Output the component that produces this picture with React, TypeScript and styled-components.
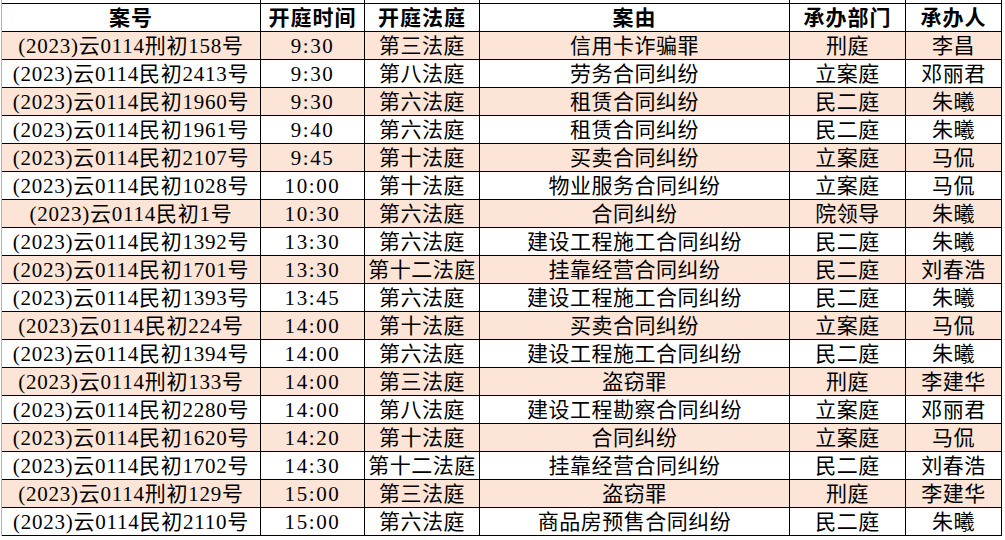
import { FC } from 'react'
import styled, { createGlobalStyle } from 'styled-components'

type Hearing = {
  caseNo: string
  time: string
  court: string
  cause: string
  dept: string
  judge: string
}

const hearings: Hearing[] = [
  { caseNo: '(2023)云0114刑初158号', time: '9:30', court: '第三法庭', cause: '信用卡诈骗罪', dept: '刑庭', judge: '李昌' },
  { caseNo: '(2023)云0114民初2413号', time: '9:30', court: '第八法庭', cause: '劳务合同纠纷', dept: '立案庭', judge: '邓丽君' },
  { caseNo: '(2023)云0114民初1960号', time: '9:30', court: '第六法庭', cause: '租赁合同纠纷', dept: '民二庭', judge: '朱曦' },
  { caseNo: '(2023)云0114民初1961号', time: '9:40', court: '第六法庭', cause: '租赁合同纠纷', dept: '民二庭', judge: '朱曦' },
  { caseNo: '(2023)云0114民初2107号', time: '9:45', court: '第十法庭', cause: '买卖合同纠纷', dept: '立案庭', judge: '马侃' },
  { caseNo: '(2023)云0114民初1028号', time: '10:00', court: '第十法庭', cause: '物业服务合同纠纷', dept: '立案庭', judge: '马侃' },
  { caseNo: '(2023)云0114民初1号', time: '10:30', court: '第六法庭', cause: '合同纠纷', dept: '院领导', judge: '朱曦' },
  { caseNo: '(2023)云0114民初1392号', time: '13:30', court: '第六法庭', cause: '建设工程施工合同纠纷', dept: '民二庭', judge: '朱曦' },
  { caseNo: '(2023)云0114民初1701号', time: '13:30', court: '第十二法庭', cause: '挂靠经营合同纠纷', dept: '民二庭', judge: '刘春浩' },
  { caseNo: '(2023)云0114民初1393号', time: '13:45', court: '第六法庭', cause: '建设工程施工合同纠纷', dept: '民二庭', judge: '朱曦' },
  { caseNo: '(2023)云0114民初224号', time: '14:00', court: '第十法庭', cause: '买卖合同纠纷', dept: '立案庭', judge: '马侃' },
  { caseNo: '(2023)云0114民初1394号', time: '14:00', court: '第六法庭', cause: '建设工程施工合同纠纷', dept: '民二庭', judge: '朱曦' },
  { caseNo: '(2023)云0114刑初133号', time: '14:00', court: '第三法庭', cause: '盗窃罪', dept: '刑庭', judge: '李建华' },
  { caseNo: '(2023)云0114民初2280号', time: '14:00', court: '第八法庭', cause: '建设工程勘察合同纠纷', dept: '立案庭', judge: '邓丽君' },
  { caseNo: '(2023)云0114民初1620号', time: '14:20', court: '第十法庭', cause: '合同纠纷', dept: '立案庭', judge: '马侃' },
  { caseNo: '(2023)云0114民初1702号', time: '14:30', court: '第十二法庭', cause: '挂靠经营合同纠纷', dept: '民二庭', judge: '刘春浩' },
  { caseNo: '(2023)云0114刑初129号', time: '15:00', court: '第三法庭', cause: '盗窃罪', dept: '刑庭', judge: '李建华' },
  { caseNo: '(2023)云0114民初2110号', time: '15:00', court: '第六法庭', cause: '商品房预售合同纠纷', dept: '民二庭', judge: '朱曦' },
]

const headers = ['案号', '开庭时间', '开庭法庭', '案由', '承办部门', '承办人']

const App: FC = () => {
  return (
    <>
      <GlobalStyle />
      <Sheet>
        {/* sliver of the row above, cut off by the screenshot */}
        <Row $height={4}>
          {headers.map((h) => (
            <Cell key={h} />
          ))}
        </Row>
        <Row $height={28}>
          {headers.map((h) => (
            <HeaderCell key={h}>{h}</HeaderCell>
          ))}
        </Row>
        {hearings.map((r, i) => (
          <Row key={r.caseNo} $height={28} $shaded={i % 2 === 0}>
            <Cell $spacing={0.75}>{r.caseNo}</Cell>
            <Cell $spacing={1.6}>{r.time}</Cell>
            <Cell>{r.court}</Cell>
            <Cell>{r.cause}</Cell>
            <Cell>{r.dept}</Cell>
            <Cell>{r.judge}</Cell>
          </Row>
        ))}
      </Sheet>
    </>
  )
}

const GlobalStyle = createGlobalStyle`
  html, body {
    margin: 0;
    padding: 0;
    background: #ffffff;
  }
  body {
    font-family: 'Liberation Serif', 'Noto Sans CJK SC', serif;
    color: #000000;
  }
`

const Sheet = styled.div`
  display: flex;
  flex-direction: column;
  width: 1000px;
  margin-left: 1px;
  border-left: 1px solid #a7b3cd;
`

const Row = styled.div<{ $height: number; $shaded?: boolean }>`
  display: grid;
  grid-template-columns: 259px 104px 115px 310px 116px 96px;
  height: ${(p) => p.$height}px;
  background-color: ${(p) => (p.$shaded ? '#fce4d6' : '#ffffff')};
`

const Cell = styled.div<{ $spacing?: number }>`
  display: flex;
  align-items: center;
  justify-content: center;
  padding-top: 2px;
  border-right: 1px solid #000;
  border-bottom: 1px solid #000;
  font-size: 21px;
  line-height: 1;
  letter-spacing: ${(p) => p.$spacing ?? 0.5}px;
  white-space: nowrap;
  overflow: hidden;
`

const HeaderCell = styled(Cell)`
  padding-top: 1px;
  font-weight: 700;
  letter-spacing: 1px;
`

export default App
